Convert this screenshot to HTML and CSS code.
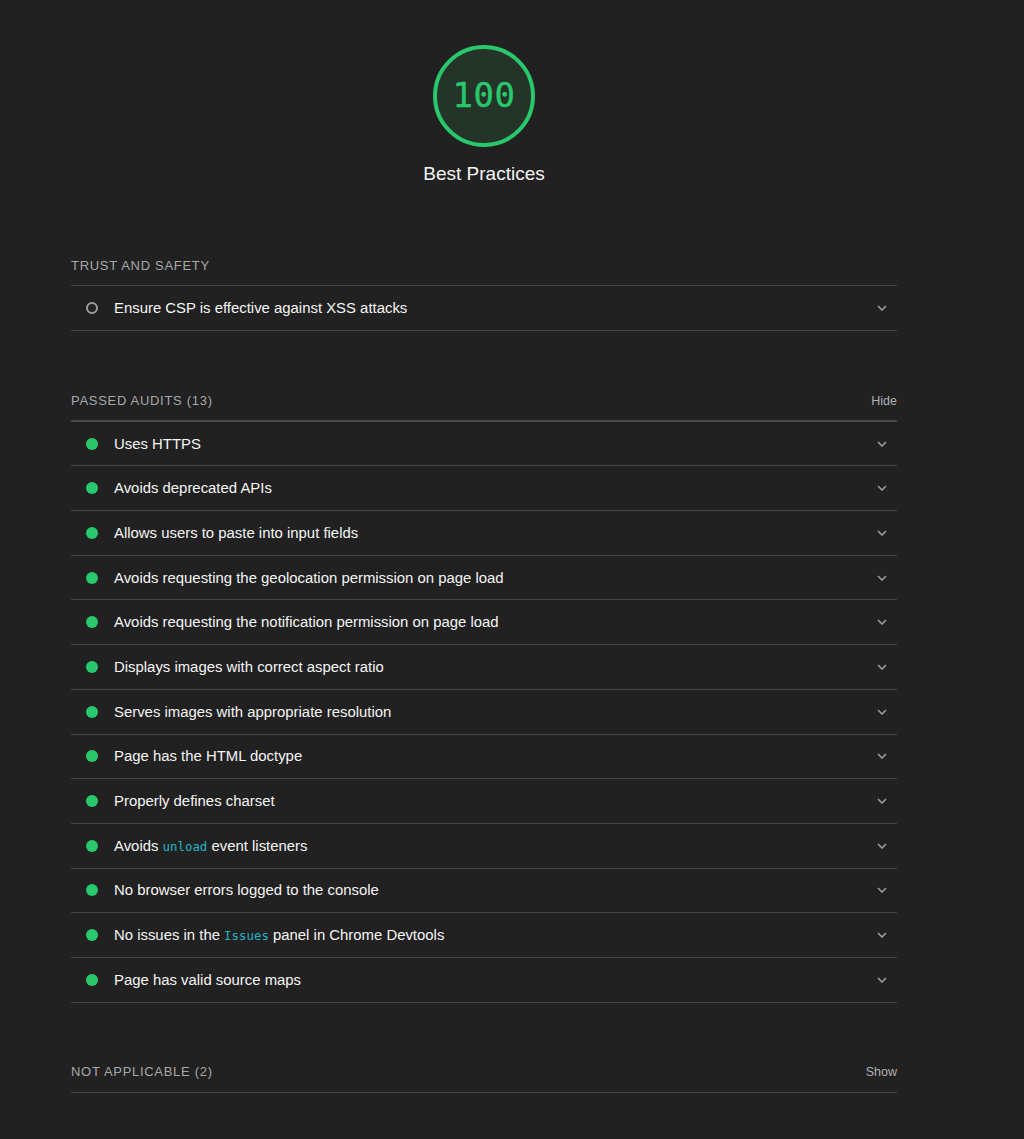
FILE: index.html
```html
<!DOCTYPE html>
<html>
<head>
<meta charset="utf-8">
<link rel="stylesheet" href="styles.css">
</head>
<body>
<div class="report">
  <div class="summary">
    <div class="gauge"><span class="gauge-score">100</span></div>
    <div class="gauge-title">Best Practices</div>
  </div>

  <section class="group group-first">
    <div class="group-header"><span>Trust and Safety</span></div>
    <div class="audit"><span class="icon icon-info"></span><span class="audit-title">Ensure CSP is effective against XSS attacks</span><svg class="chev" viewBox="0 0 10 6"><path d="M1 1l4 4 4-4" /></svg></div>
  </section>

  <section class="group group-passed">
    <div class="group-header"><span>Passed audits (13)</span><span class="toggle">Hide</span></div>
    <div class="audit"><span class="icon icon-pass"></span><span class="audit-title">Uses HTTPS</span><svg class="chev" viewBox="0 0 10 6"><path d="M1 1l4 4 4-4" /></svg></div>
    <div class="audit"><span class="icon icon-pass"></span><span class="audit-title">Avoids deprecated APIs</span><svg class="chev" viewBox="0 0 10 6"><path d="M1 1l4 4 4-4" /></svg></div>
    <div class="audit"><span class="icon icon-pass"></span><span class="audit-title">Allows users to paste into input fields</span><svg class="chev" viewBox="0 0 10 6"><path d="M1 1l4 4 4-4" /></svg></div>
    <div class="audit"><span class="icon icon-pass"></span><span class="audit-title">Avoids requesting the geolocation permission on page load</span><svg class="chev" viewBox="0 0 10 6"><path d="M1 1l4 4 4-4" /></svg></div>
    <div class="audit"><span class="icon icon-pass"></span><span class="audit-title">Avoids requesting the notification permission on page load</span><svg class="chev" viewBox="0 0 10 6"><path d="M1 1l4 4 4-4" /></svg></div>
    <div class="audit"><span class="icon icon-pass"></span><span class="audit-title">Displays images with correct aspect ratio</span><svg class="chev" viewBox="0 0 10 6"><path d="M1 1l4 4 4-4" /></svg></div>
    <div class="audit"><span class="icon icon-pass"></span><span class="audit-title">Serves images with appropriate resolution</span><svg class="chev" viewBox="0 0 10 6"><path d="M1 1l4 4 4-4" /></svg></div>
    <div class="audit"><span class="icon icon-pass"></span><span class="audit-title">Page has the HTML doctype</span><svg class="chev" viewBox="0 0 10 6"><path d="M1 1l4 4 4-4" /></svg></div>
    <div class="audit"><span class="icon icon-pass"></span><span class="audit-title">Properly defines charset</span><svg class="chev" viewBox="0 0 10 6"><path d="M1 1l4 4 4-4" /></svg></div>
    <div class="audit"><span class="icon icon-pass"></span><span class="audit-title">Avoids <code>unload</code> event listeners</span><svg class="chev" viewBox="0 0 10 6"><path d="M1 1l4 4 4-4" /></svg></div>
    <div class="audit"><span class="icon icon-pass"></span><span class="audit-title">No browser errors logged to the console</span><svg class="chev" viewBox="0 0 10 6"><path d="M1 1l4 4 4-4" /></svg></div>
    <div class="audit"><span class="icon icon-pass"></span><span class="audit-title">No issues in the <code>Issues</code> panel in Chrome Devtools</span><svg class="chev" viewBox="0 0 10 6"><path d="M1 1l4 4 4-4" /></svg></div>
    <div class="audit"><span class="icon icon-pass"></span><span class="audit-title">Page has valid source maps</span><svg class="chev" viewBox="0 0 10 6"><path d="M1 1l4 4 4-4" /></svg></div>
  </section>

  <section class="group group-na">
    <div class="group-header"><span>Not applicable (2)</span><span class="toggle">Show</span></div>
  </section>
</div>
</body>
</html>
```
FILE: styles.css
```css
html, body {
  margin: 0;
  padding: 0;
  background: #212121;
}
body {
  font-family: "Liberation Sans", Arial, sans-serif;
  color: #f5f5f5;
  min-height: 1139px;
}
.report {
  width: 826px;
  margin-left: 71px;
  padding-top: 45px;
}
.summary {
  display: flex;
  flex-direction: column;
  align-items: center;
}
.gauge {
  width: 94px;
  height: 94px;
  border: 4px solid #2ac86d;
  border-radius: 50%;
  background: #253428;
  display: flex;
  align-items: center;
  justify-content: center;
}
.gauge-score {
  font-family: "DejaVu Sans Mono", monospace;
  font-size: 34px;
  color: #2ac86d;
  letter-spacing: 0.5px;
  margin-top: -3px;
  -webkit-text-stroke: 0.4px #2ac86d;
}
.gauge-title {
  margin-top: 15px;
  font-size: 19px;
  color: #f5f5f5;
  line-height: 24px;
}
.group-first {
  margin-top: 60px;
}
.group-passed {
  margin-top: 52px;
}
.group-na {
  margin-top: 50px;
}
.group-header {
  display: flex;
  justify-content: space-between;
  align-items: center;
  height: 38px;
  border-bottom: 1px solid #464646;
  font-size: 13px;
  color: #a8a8a8;
  text-transform: uppercase;
  letter-spacing: 0.7px;
  padding-bottom: 1px;
  box-sizing: content-box;
}
.group-header .toggle {
  text-transform: none;
  letter-spacing: 0;
  font-size: 12.5px;
  color: #b0b0b0;
}
.group-passed .group-header {
  border-bottom-width: 2px;
  border-bottom-color: #484848;
  height: 36px;
  padding-bottom: 1px;
}
.audit {
  display: flex;
  align-items: center;
  height: 43.7px;
  border-bottom: 1px solid #464646;
  padding-left: 15px;
  padding-right: 10px;
}
.icon {
  width: 12px;
  height: 12px;
  border-radius: 50%;
  flex: none;
  box-sizing: border-box;
}
.icon-pass {
  background: #2ac86d;
}
.icon-info {
  border: 2px solid #9e9e9e;
}
.audit-title {
  margin-left: 16px;
  font-size: 14.9px;
  color: #f5f5f5;
  flex: 1;
}
.audit-title code {
  font-family: "DejaVu Sans Mono", monospace;
  font-size: 12.4px;
  color: #1fb3c5;
}
.chev {
  width: 10px;
  height: 6px;
  fill: none;
  stroke: #a0a0a0;
  stroke-width: 1.5;
}
```
